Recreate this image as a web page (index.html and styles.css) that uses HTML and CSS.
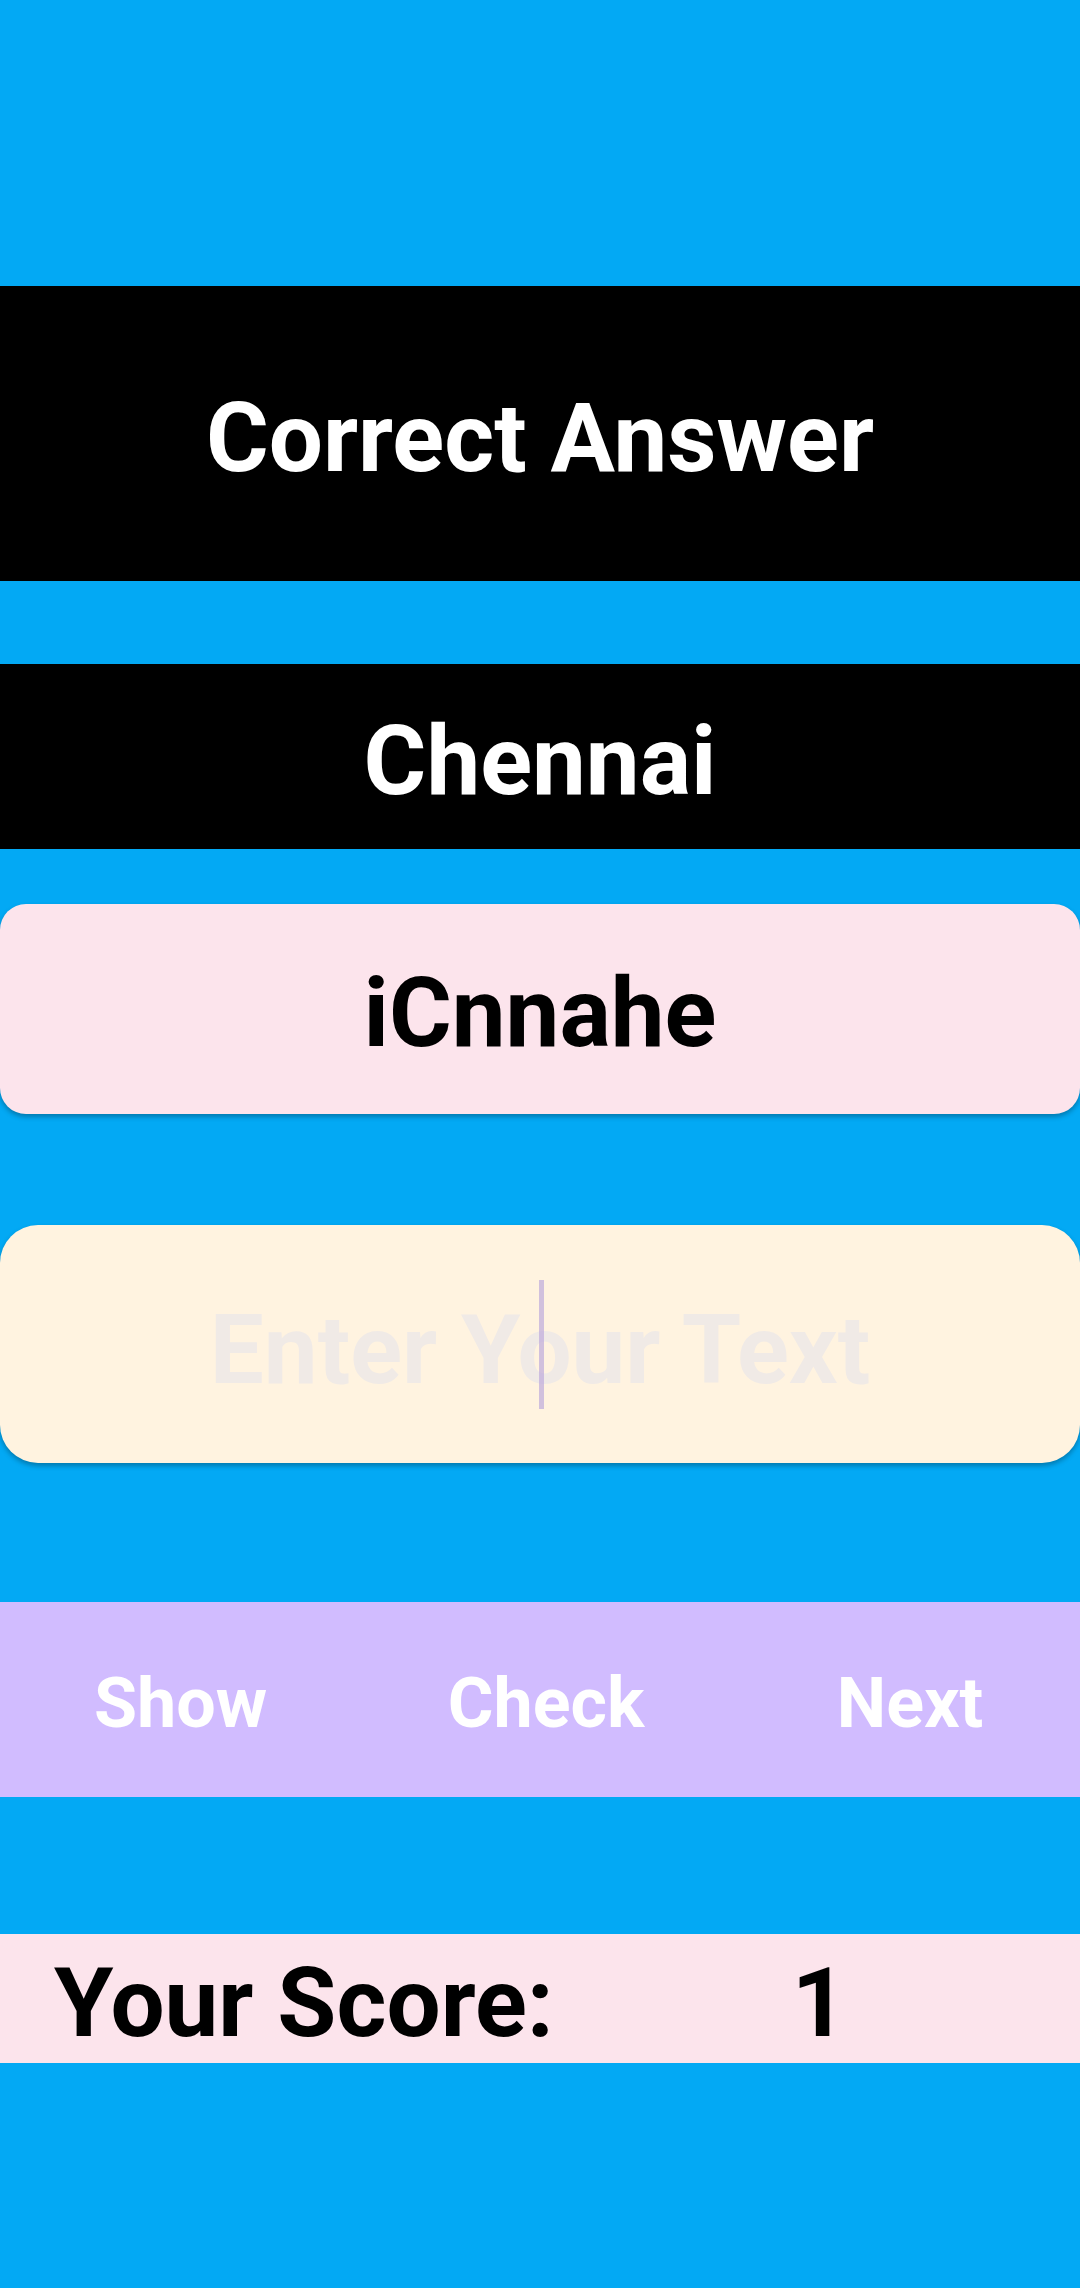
FILE: index.html
```html
<!DOCTYPE html>
<html lang="en">
<head>
<meta charset="utf-8">
<title>Word Scramble</title>
<link rel="stylesheet" href="styles.css">
</head>
<body>
<main class="screen">
  <div class="banner banner-title">Correct Answer</div>
  <div class="banner banner-answer">Chennai</div>
  <div class="card card-scrambled">iCnnahe</div>
  <div class="card card-input">
    <span class="placeholder">Enter Your Text</span>
    <span class="cursor"></span>
  </div>
  <nav class="actions">
    <button class="action">Show</button>
    <button class="action">Check</button>
    <button class="action">Next</button>
  </nav>
  <div class="score">
    <span class="score-label">Your Score:</span>
    <span class="score-value">1</span>
  </div>
</main>
</body>
</html>
```

FILE: styles.css
```css
html, body {
  margin: 0;
  padding: 0;
  background: #03A9F4;
}

.screen {
  width: 1080px;
  height: 2288px;
  display: flex;
  flex-direction: column;
  padding-top: 286px;
  box-sizing: border-box;
  font-family: Roboto, "Noto Sans", sans-serif;
  font-weight: 700;
}

.banner {
  background: #000;
  color: #fff;
  font-size: 96px;
  display: flex;
  align-items: center;
  justify-content: center;
  line-height: 1;
  padding-top: 8px;
  box-sizing: border-box;
}

.banner-title {
  height: 295px;
}

.banner-answer {
  height: 185px;
  margin-top: 83px;
}

.card {
  display: flex;
  align-items: center;
  justify-content: center;
  font-size: 96px;
  line-height: 1;
  box-shadow: 0 3px 5px rgba(0, 0, 0, 0.28);
  box-sizing: border-box;
}

.card-scrambled {
  margin-top: 55px;
  height: 210px;
  background: #FCE4EC;
  color: #000;
  border-radius: 26px;
  padding-top: 8px;
}

.card-input {
  position: relative;
  margin-top: 111px;
  height: 238px;
  background: #FFF3E0;
  border-radius: 38px;
  padding-top: 12px;
}

.placeholder {
  color: #F0EAE6;
}

.cursor {
  position: absolute;
  left: 539px;
  top: 55px;
  width: 5px;
  height: 129px;
  background: rgba(190, 170, 220, 0.7);
}

.actions {
  margin-top: 139px;
  height: 195px;
  background: #D1BCFF;
  display: grid;
  grid-template-columns: 361px 370px 349px;
}

.action {
  border: none;
  background: transparent;
  color: #fff;
  font-family: inherit;
  font-weight: 700;
  font-size: 70px;
  padding: 6px 0 0;
  line-height: 1;
}

.action:nth-child(3) {
  padding-left: 9px;
}

.score {
  margin-top: 137px;
  height: 129px;
  background: #FCE4EC;
  display: flex;
  align-items: center;
  padding-left: 54px;
  padding-top: 9px;
  box-sizing: border-box;
  font-size: 96px;
  line-height: 1;
  color: #000;
}

.score-value {
  margin-left: 238px;
}
```
